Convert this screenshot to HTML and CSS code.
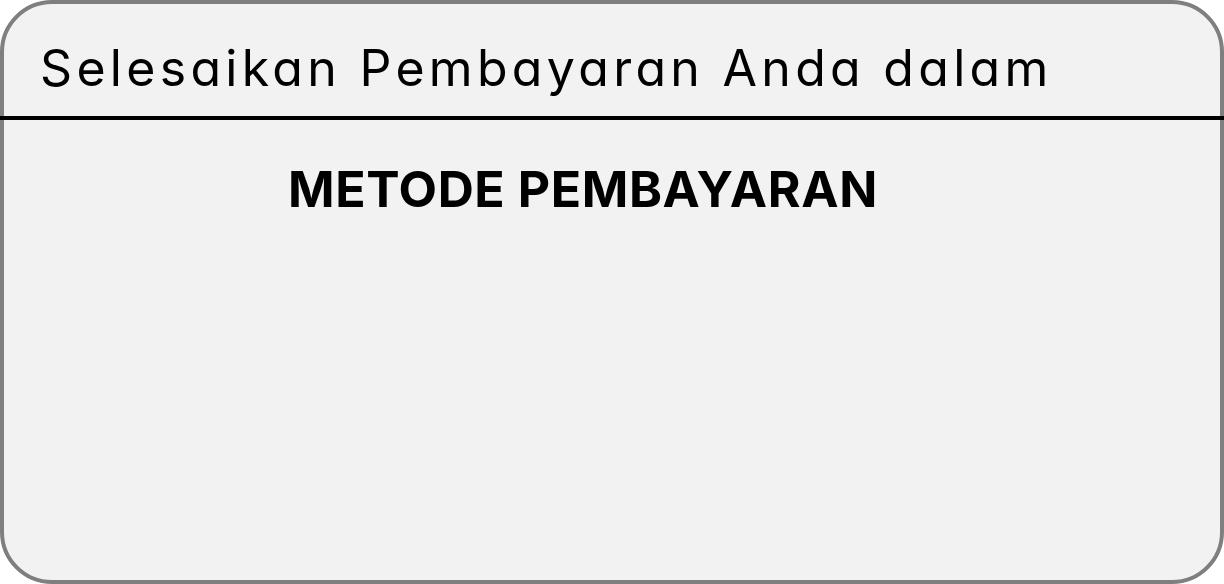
FILE: index.html
```html
<!DOCTYPE html>
<html lang="id">
<head>
<meta charset="utf-8">
<title>Metode Pembayaran</title>
<link rel="stylesheet" href="styles.css">
</head>
<body>
<div class="card">
  <header class="card-header">
    <h1 class="card-title">Selesaikan Pembayaran Anda dalam</h1>
  </header>
  <section class="card-body">
    <h2 class="section-title">METODE PEMBAYARAN</h2>
  </section>
</div>
</body>
</html>
```

FILE: styles.css
```css
html, body {
  margin: 0;
  padding: 0;
  background: #ffffff;
}

.card {
  box-sizing: border-box;
  width: 1224px;
  height: 584px;
  border: 4px solid #7f7f7f;
  border-radius: 52px;
  background: #f2f2f2;
  font-family: Inter, "Noto Sans", sans-serif;
  font-feature-settings: "cv11" 1;
  color: #000000;
}

.card-header {
  box-sizing: border-box;
  height: 116px;
  margin: 0 -4px;
  padding: 16px 0 0 40px;
  border-bottom: 4px solid #000000;
  display: flex;
  align-items: center;
}

.card-title {
  margin: 0;
  font-size: 50px;
  font-weight: 400;
  letter-spacing: 4.3px;
  line-height: 1;
}

.card-body {
  padding: 44px 0 0 284px;
}

.section-title {
  margin: 0;
  font-size: 50px;
  font-weight: 700;
  letter-spacing: 0.6px;
  line-height: 1;
}
```
